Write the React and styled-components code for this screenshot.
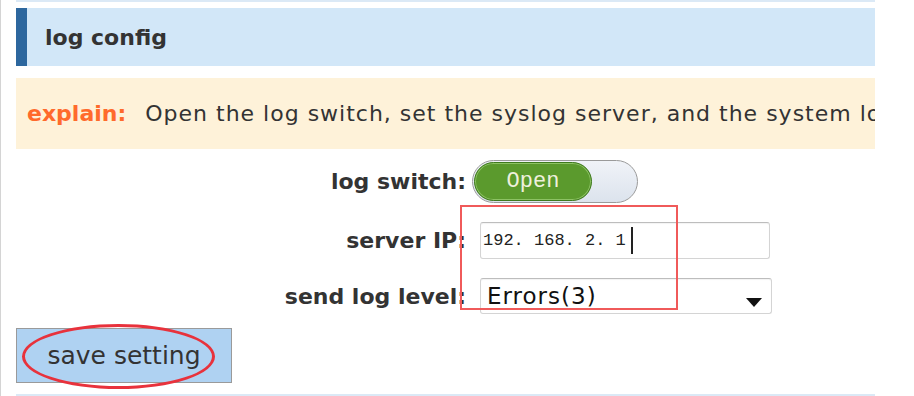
import React from 'react';
import styled, { createGlobalStyle } from 'styled-components';

const GlobalStyle = createGlobalStyle`
  html, body {
    margin: 0;
    padding: 0;
    background: #fff;
  }
  body {
    font-family: "DejaVu Sans", "Liberation Sans", sans-serif;
    color: #333;
  }
`;

const Page = styled.div`
  width: 914px;
  height: 396px;
  box-sizing: border-box;
  padding-left: 15px;
  border-left: 2px solid #d4d4d4;
  margin-left: -1px;
  overflow: hidden;
`;

const Column = styled.div`
  width: 859px;
  border-top: 2px solid #dbe9f6;
  padding-top: 6px;
  overflow: hidden;
`;

const Header = styled.div`
  height: 58px;
  box-sizing: border-box;
  background: #d2e7f8;
  border-left: 11px solid #2d679e;
  padding-left: 18px;
  display: flex;
  align-items: center;
  font-size: 22px;
  font-weight: bold;
  color: #333;
`;

const Explain = styled.div`
  margin-top: 12px;
  height: 71px;
  background: #fef2d9;
  padding-left: 11px;
  display: flex;
  align-items: center;
  white-space: nowrap;
  overflow: hidden;
`;

const ExplainLabel = styled.span`
  font-size: 22px;
  font-weight: bold;
  color: #ff6a2c;
`;

const ExplainText = styled.span`
  margin-left: 19px;
  font-size: 22px;
  letter-spacing: 1px;
  color: #333;
`;

const Form = styled.div`
  position: relative;
  margin-top: 11px;
  display: grid;
  grid-template-columns: 450px 1fr;
  grid-template-rows: 43px 37px 36px;
  column-gap: 6px;
  row-gap: 19px;
  align-items: center;
`;

const Label = styled.div`
  text-align: right;
  font-size: 22px;
  font-weight: bold;
  color: #333;
  white-space: nowrap;
`;

const Switch = styled.div`
  width: 166px;
  height: 43px;
  box-sizing: border-box;
  border: 1px solid #9a9a9a;
  border-radius: 22px;
  background: linear-gradient(#f0f3f8, #dce3ed);
  padding: 1px;
  display: flex;
`;

const Knob = styled.div`
  width: 118px;
  height: 100%;
  box-sizing: border-box;
  border-radius: 20px;
  background: #5b9a2d;
  border: 1px solid #3f7a1e;
  box-shadow: inset 0 0 0 1px #8dc264;
  display: flex;
  align-items: center;
  justify-content: center;
  font-family: "Liberation Mono", monospace;
  font-size: 22px;
  color: #eef0dc;
`;

const Field = styled.div`
  margin-left: 8px;
  width: ${(p) => p.$width}px;
  height: 100%;
  box-sizing: border-box;
  border: 1px solid #d4d4d4;
  border-top-color: #bdbdbd;
  border-radius: 3px;
  box-shadow: inset 0 1px 1px rgba(0, 0, 0, 0.05);
  display: flex;
  align-items: center;
  position: relative;
`;

const IpText = styled.span`
  padding-left: 2px;
  font-family: "Liberation Mono", monospace;
  font-size: 17px;
  color: #222;
`;

const Caret = styled.span`
  width: 2px;
  height: 27px;
  margin-left: 5px;
  background: #222;
`;

const SelectText = styled.span`
  padding-left: 6px;
  font-size: 23px;
  letter-spacing: 1px;
  color: #111;
`;

const Arrow = styled.svg`
  position: absolute;
  right: 9px;
  top: 19px;
`;

const Marker = styled.div`
  position: absolute;
  left: 444px;
  top: 45px;
  width: 218px;
  height: 105px;
  box-sizing: border-box;
  border: 2px solid #f05a5a;
  pointer-events: none;
`;

const ButtonWrap = styled.div`
  position: relative;
  margin-top: 14px;
  width: 216px;
`;

const SaveButton = styled.button`
  width: 216px;
  height: 55px;
  box-sizing: border-box;
  background: #afd2f2;
  border: 1px solid #9a9a9a;
  border-radius: 0;
  font-family: "DejaVu Sans", sans-serif;
  font-size: 25px;
  color: #333;
  padding: 0;
`;

const Ring = styled.div`
  position: absolute;
  left: 6px;
  top: -4px;
  width: 193px;
  height: 65px;
  box-sizing: border-box;
  border: 3.5px solid #e8323c;
  border-radius: 50%;
  pointer-events: none;
`;

const BottomLine = styled.div`
  margin-top: 11px;
  height: 2px;
  background: #dbe9f6;
`;

export default function App() {
  return (
    <>
      <GlobalStyle />
      <Page>
        <Column>
          <Header>log config</Header>
          <Explain>
            <ExplainLabel>explain:</ExplainLabel>
            <ExplainText>
              Open the log switch, set the syslog server, and the system log level to send.
            </ExplainText>
          </Explain>
          <Form>
            <Label>log switch:</Label>
            <div>
              <Switch>
                <Knob>Open</Knob>
              </Switch>
            </div>
            <Label>server IP:</Label>
            <Field $width={290}>
              <IpText>192. 168. 2. 1</IpText>
              <Caret />
            </Field>
            <Label>send log level:</Label>
            <Field $width={292}>
              <SelectText>Errors(3)</SelectText>
              <Arrow width="16" height="9" viewBox="0 0 16 9">
                <path d="M0 0 H16 L8 9 Z" fill="#111" />
              </Arrow>
            </Field>
            <Marker />
          </Form>
          <ButtonWrap>
            <SaveButton>save setting</SaveButton>
            <Ring />
          </ButtonWrap>
          <BottomLine />
        </Column>
      </Page>
    </>
  );
}
